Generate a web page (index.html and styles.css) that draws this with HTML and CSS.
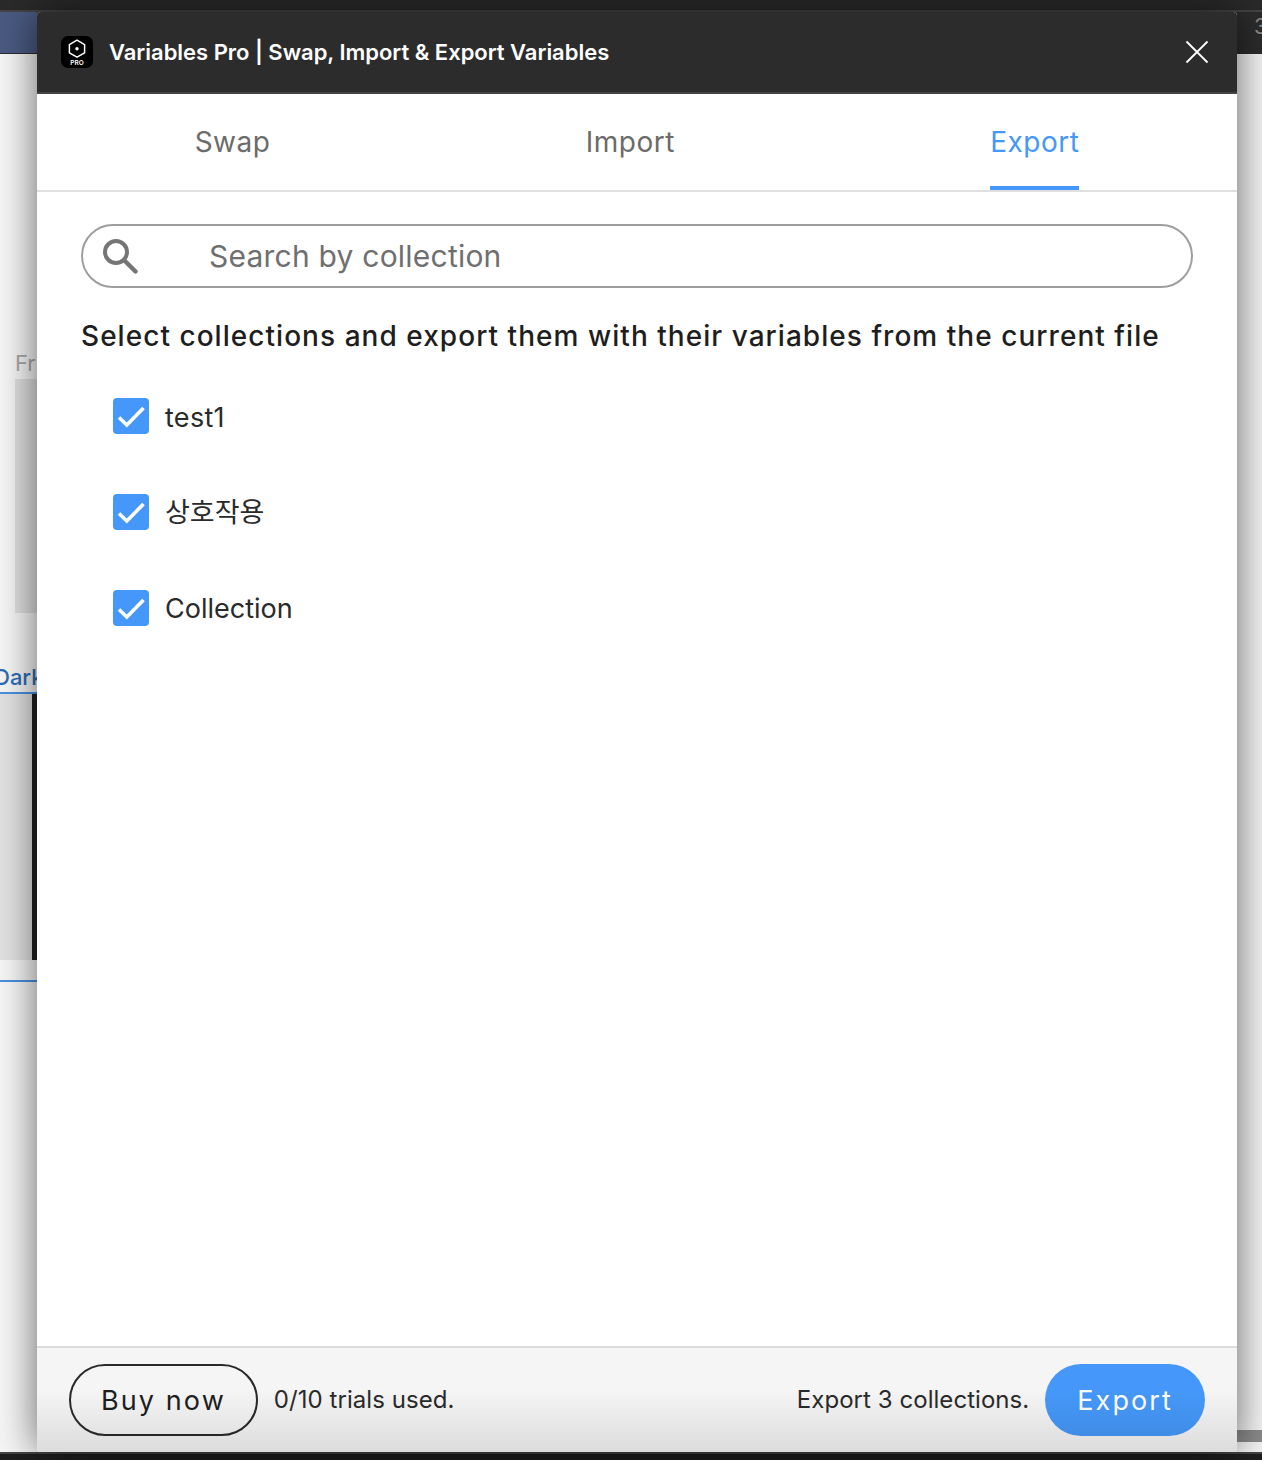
FILE: index.html
```html
<!DOCTYPE html>
<html lang="en">
<head>
<meta charset="utf-8">
<title>Variables Pro</title>
<link rel="stylesheet" href="styles.css">
</head>
<body>
<div class="backdrop">
  <div class="app-top"><span class="app-top-blue"></span><span class="app-top-num">3</span></div>
  <span class="bg-fr">Fr</span>
  <div class="bg-frame"></div>
  <span class="bg-dark">Dark</span>
  <div class="bg-dark-panel"></div>
  <div class="bg-line"></div>
  <div class="bg-scroll"></div>
  <div class="app-bottom"></div>
</div>
<main class="modal">
  <header class="modal-header">
    <svg class="logo" viewBox="0 0 32 32" aria-hidden="true">
      <rect width="32" height="32" rx="7" fill="#000"/>
      <path d="M16 4.2 23.6 8.6V16.8L16 21.2 8.4 16.8V8.6Z" fill="none" stroke="#fff" stroke-width="1.5" stroke-linejoin="round"/>
      <circle cx="16" cy="12.7" r="1.7" fill="#fff"/>
      <text x="16" y="28.6" class="logo-text" text-anchor="middle">PRO</text>
    </svg>
    <h1 class="modal-title">Variables Pro | Swap, Import &amp; Export Variables</h1>
    <svg class="close" viewBox="0 0 24 24" aria-hidden="true"><path d="M1.5 1.5 22.5 22.5M22.5 1.5 1.5 22.5" stroke="#fff" stroke-width="1.8" fill="none"/></svg>
  </header>
  <nav class="tabs">
    <span class="tab">Swap</span>
    <span class="tab">Import</span>
    <span class="tab tab-active">Export</span>
  </nav>
  <section class="content">
    <div class="search">
      <svg class="search-icon" viewBox="0 0 36 36" aria-hidden="true"><circle cx="14" cy="14" r="11" fill="none" stroke="#757575" stroke-width="4"/><path d="M22.5 22.5 33.5 33.5" stroke="#757575" stroke-width="4.4" stroke-linecap="round"/></svg>
      <span class="search-text">Search by collection</span>
    </div>
    <p class="lead">Select collections and export them with their variables from the current file</p>
    <ul class="list">
      <li class="row"><span class="check"><svg viewBox="0 0 36 36" aria-hidden="true"><path d="M6 19.5 13.8 27 30.5 10" fill="none" stroke="#fff" stroke-width="3.6"/></svg></span><span class="row-label row-label-first">test1</span></li>
      <li class="row"><span class="check"><svg viewBox="0 0 36 36" aria-hidden="true"><path d="M6 19.5 13.8 27 30.5 10" fill="none" stroke="#fff" stroke-width="3.6"/></svg></span><span class="row-label row-label-ko">상호작용</span></li>
      <li class="row"><span class="check"><svg viewBox="0 0 36 36" aria-hidden="true"><path d="M6 19.5 13.8 27 30.5 10" fill="none" stroke="#fff" stroke-width="3.6"/></svg></span><span class="row-label">Collection</span></li>
    </ul>
  </section>
  <footer class="footer">
    <button class="btn btn-outline">Buy now</button>
    <span class="footer-text">0/10 trials used.</span>
    <span class="footer-text footer-right">Export 3 collections.</span>
    <button class="btn btn-primary">Export</button>
  </footer>
</main>
</body>
</html>
```
FILE: styles.css
```css
* { box-sizing: border-box; }
html, body { margin: 0; padding: 0; }
body {
  position: relative;
  width: 1262px;
  height: 1460px;
  overflow: hidden;
  background: #f6f6f6;
  font-family: Inter, "Noto Sans CJK KR", sans-serif;
}
.backdrop { position: absolute; inset: 0; }
.app-top {
  height: 54px;
  background: #2c2c2c;
  border-top: 10px solid #2a2a2a;
  display: flex;
  justify-content: space-between;
  box-shadow: inset 0 2px 0 #444;
  position: relative;
}
.app-top-blue {
  width: 37px;
  height: 41px;
  margin-top: 2px;
  background: #4a5a82;
}
.app-top-num {
  position: absolute;
  left: 1254px;
  top: 3px;
  color: #8a8a8a;
  font-size: 22px;
}
.bg-fr { position: absolute; left: 15px; top: 350px; font-size: 22px; color: #a8a8a8; }
.bg-frame { position: absolute; left: 15px; top: 379px; width: 30px; height: 234px; background: #e0e0e0; }
.bg-dark {
  position: absolute; left: -6px; top: 664px; font-size: 22px; font-weight: 500; color: #2d6db5;
}
.bg-dark-panel {
  position: absolute; left: 0; top: 692px; width: 37px; height: 268px;
  background: #e2e2e2;
  border-top: 2px solid #4a90e2;
}
.bg-dark-panel::after {
  content: "";
  position: absolute; left: 32px; top: 0; width: 5px; bottom: 0; background: #222;
}
.bg-line { position: absolute; left: 0; top: 980px; width: 37px; height: 2px; background: #4a90e2; }
.bg-scroll { position: absolute; left: 1237px; top: 1430px; width: 25px; height: 12px; background: #8c8c8c; }
.app-bottom { position: absolute; left: 0; right: 0; top: 1452px; height: 8px; background: #1e1e1e; border-top: 2px solid #444; }

.modal {
  position: absolute;
  left: 37px;
  top: 12px;
  width: 1200px;
  height: 1440px;
  background: #fff;
  display: flex;
  flex-direction: column;
  border-radius: 4px;
  overflow: hidden;
  box-shadow: 0 0 40px rgba(0, 0, 0, .6);
}
.modal-header {
  height: 82px;
  background: #2c2c2c;
  border-bottom: 2px solid #444;
  display: flex;
  align-items: center;
  padding: 0 28px 0 24px;
  flex: none;
}
.logo { width: 32px; height: 32px; flex: none; }
.logo-text { font: 600 6.5px Inter, sans-serif; fill: #fff; }
.modal-title {
  margin: 0 0 0 16px;
  font-size: 22px;
  font-weight: 600;
  letter-spacing: -.02px;
  color: #fff;
  flex: 1;
}
.close { width: 24px; height: 24px; flex: none; }
.tabs {
  height: 98px;
  flex: none;
  display: flex;
  justify-content: space-around;
  border-bottom: 2px solid #e0e0e0;
}
.tab {
  height: 96px;
  font-size: 28px;
  line-height: 97px;
  letter-spacing: .5px;
  color: #6b6b6b;
}
.tab-active { color: #4598f9; border-bottom: 4px solid #4598f9; }
.content { flex: 1; padding: 32px 44px 0; }
.search {
  height: 64px;
  border: 2px solid #9e9e9e;
  border-radius: 32px;
  display: flex;
  align-items: center;
  padding-left: 19px;
}
.search-icon { width: 36px; height: 36px; flex: none; }
.search-text { margin-left: 71px; font-size: 30px; color: #6f6f6f; letter-spacing: .22px; }
.lead {
  margin: 30px 0 0;
  font-size: 28px;
  line-height: 36px;
  font-weight: 500;
  letter-spacing: 1.04px;
  color: #1e1e1e;
  white-space: nowrap;
}
.list { list-style: none; margin: 0; padding: 0 0 0 32px; }
.row { display: flex; align-items: center; height: 36px; margin-top: 60px; gap: 16px; }
.row:first-child { margin-top: 44px; }
.check { width: 36px; height: 36px; background: #4598f9; border-radius: 4px; flex: none; }
.check svg { display: block; width: 36px; height: 36px; }
.row-label { font-size: 27px; color: #2a2a2a; }
.row-label-first { padding-top: 2px; letter-spacing: .3px; }
.row-label-ko { padding: 0 0 3px; }
.footer {
  height: 106px;
  flex: none;
  position: relative;
  border-top: 2px solid #dcdcdc;
  background: #f5f5f5;
  display: flex;
  align-items: center;
  padding: 0 32px;
}
.footer::after {
  content: "";
  position: absolute;
  inset: 0;
  pointer-events: none;
  background: linear-gradient(rgba(0, 0, 0, 0) 40%, rgba(0, 0, 0, .1) 100%);
}
.btn {
  height: 72px;
  border-radius: 36px;
  font-family: inherit;
  font-size: 27px;
  letter-spacing: 2.1px;
  padding: 0 30px;
  flex: none;
}
.btn-outline { border: 2px solid #2a2a2a; background: transparent; color: #1e1e1e; }
.btn-primary { border: 0; background: #4598f9; color: #fff; padding: 0 32px; }
.footer-text { font-size: 24px; letter-spacing: .05px; color: #2a2a2a; margin-left: 16px; padding-bottom: 2px; }
.footer-right { margin-left: auto; margin-right: 16px; }
```
